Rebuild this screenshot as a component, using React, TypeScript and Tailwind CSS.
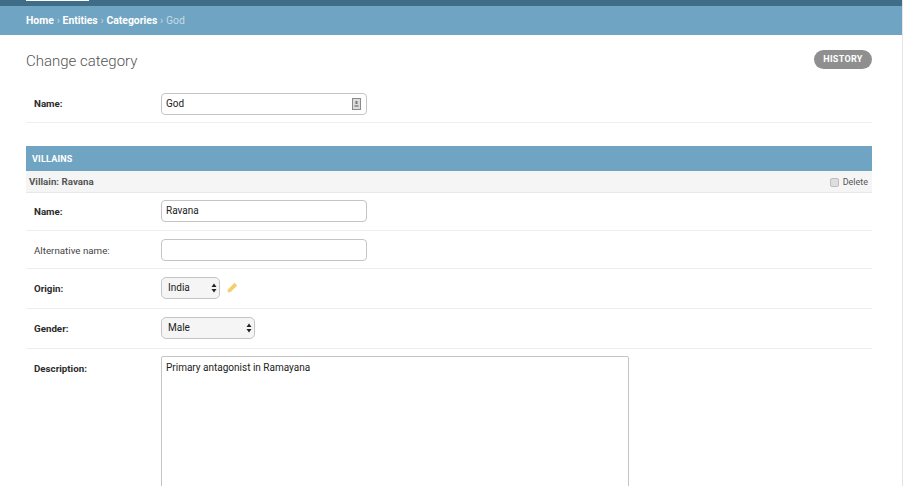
import React from "react";

const inputCls =
  "block w-[206px] h-[22px] rounded-[4px] border border-[#c4c4c4] bg-white px-[4px] pb-px text-[10px] text-[#222] outline-none";

function Arrows() {
  return (
    <svg className="absolute right-[3px] top-[6px]" width="6" height="10" viewBox="0 0 6 10">
      <path d="M3 0.5 L5.5 4 H0.5 Z M3 9.5 L5.5 6 H0.5 Z" fill="#222" />
    </svg>
  );
}

function Sel({ value, w }: { value: string; w: string }) {
  return (
    <div className={`relative h-[22px] ${w}`}>
      <select
        defaultValue={value}
        className="block h-full w-full appearance-none rounded-[5px] border border-[#c4c4c4] bg-[#f5f5f5] pb-px pl-[6px] text-[10px] text-[#222] outline-none"
      >
        <option>{value}</option>
      </select>
      <Arrows />
    </div>
  );
}

function Row({
  label,
  bold = true,
  cls,
  lcls = "pt-[5px]",
  children,
}: {
  label: string;
  bold?: boolean;
  cls: string;
  lcls?: string;
  children: React.ReactNode;
}) {
  return (
    <div className={`flex border-b border-[#eeeeee] pl-[8px] ${cls}`}>
      <div
        className={`w-[127px] shrink-0 text-[9.75px] leading-[14px] ${lcls} ${
          bold ? "font-bold text-[#2b2b2b]" : "text-[#444]"
        }`}
      >
        {label}
      </div>
      {children}
    </div>
  );
}

export default function App() {
  return (
    <div className="h-[486px] w-[904px] overflow-hidden bg-white font-['Roboto',sans-serif] text-[#333]">
      <div className="h-full w-[903px] border-r border-[#e4e4e4]">
        <div className="h-[6px] bg-[#3f6d87] pl-[26px]">
          <div className="h-px w-[63px] bg-white" />
        </div>
        <div className="flex h-[29px] items-center bg-[#6fa4c2] pl-[26px] text-[10.4px] font-bold text-white">
          Home
          <span className="px-[2.8px] font-normal text-[#c5dbe7]">›</span>
          Entities
          <span className="px-[2.8px] font-normal text-[#c5dbe7]">›</span>
          Categories
          <span className="px-[2.8px] font-normal text-[#c5dbe7]">›</span>
          <span className="font-normal text-[#c5dbe7]">God</span>
        </div>
        <div className="w-[872px] pl-[26px]">
          <div className="flex h-[58px] items-start justify-between">
            <h1 className="pt-[16px] text-[15px] font-light leading-[20px] text-[#555]">Change category</h1>
            <button className="mt-[15px] h-[19px] w-[58px] rounded-full bg-[#8f8f8f] pt-px text-center text-[9px] font-bold tracking-[0.3px] text-white">
              HISTORY
            </button>
          </div>
          <Row label="Name:" cls="h-[30px]" lcls="pt-[4px]">
            <div className="relative">
              <input readOnly value="God" className={inputCls} />
              <svg className="absolute right-[6px] top-[5px]" width="9" height="12" viewBox="0 0 9 12">
                <rect x="0.5" y="0.5" width="8" height="11" fill="#dcdcdc" stroke="#8a8a8a" />
                <rect x="3.5" y="3" width="2" height="3" fill="#777" />
                <rect x="2.5" y="7" width="4" height="2" fill="#999" />
              </svg>
            </div>
          </Row>
          <div className="mt-[23px] flex h-[25px] items-center bg-[#6fa4c2] pl-[6px] pt-[2px] text-[9px] font-bold tracking-[0.2px] text-white">
            VILLAINS
          </div>
          <div className="flex h-[22px] items-center justify-between border-b border-[#e8e8e8] bg-[#f5f5f5] pl-[3px] pr-[4px] pt-[2px] text-[9.75px]">
            <span className="font-bold text-[#555]">Villain: Ravana</span>
            <span className="flex items-center gap-[4px] text-[9px] text-[#555]">
              <span className="h-[9px] w-[9px] rounded-[2px] border border-[#bdbdbd] bg-[#dedede]" />
              Delete
            </span>
          </div>
          <Row label="Name:" cls="pt-[7px] h-[38px]">
            <input readOnly value="Ravana" className={inputCls} />
          </Row>
          <Row label="Alternative name:" bold={false} cls="pt-[8px] h-[38px]">
            <input readOnly value="" className={inputCls} />
          </Row>
          <Row label="Origin:" cls="pt-[8px] h-[40px]">
            <div className="flex items-start">
              <Sel value="India" w="w-[59px]" />
              <svg className="ml-[7px] mt-[5px]" width="11" height="11" viewBox="0 0 11 11">
                <path d="M0.5 10.5 L1 7.2 L7.5 0.8 L10.2 3.5 L3.8 10 Z" fill="#f3ce74" />
              </svg>
            </div>
          </Row>
          <Row label="Gender:" cls="pt-[8px] h-[40px]">
            <Sel value="Male" w="w-[94px]" />
          </Row>
          <div className="flex pl-[8px] pt-[7px]">
            <div className="w-[127px] shrink-0 pt-[6px] text-[9.75px] font-bold leading-[14px] text-[#2b2b2b]">
              Description:
            </div>
            <textarea
              readOnly
              value="Primary antagonist in Ramayana"
              className="block h-[200px] w-[468px] resize-none rounded-[2px] border border-[#c4c4c4] px-[4px] py-[4px] text-[10px] leading-[13px] text-[#222] outline-none"
            />
          </div>
        </div>
      </div>
    </div>
  );
}
